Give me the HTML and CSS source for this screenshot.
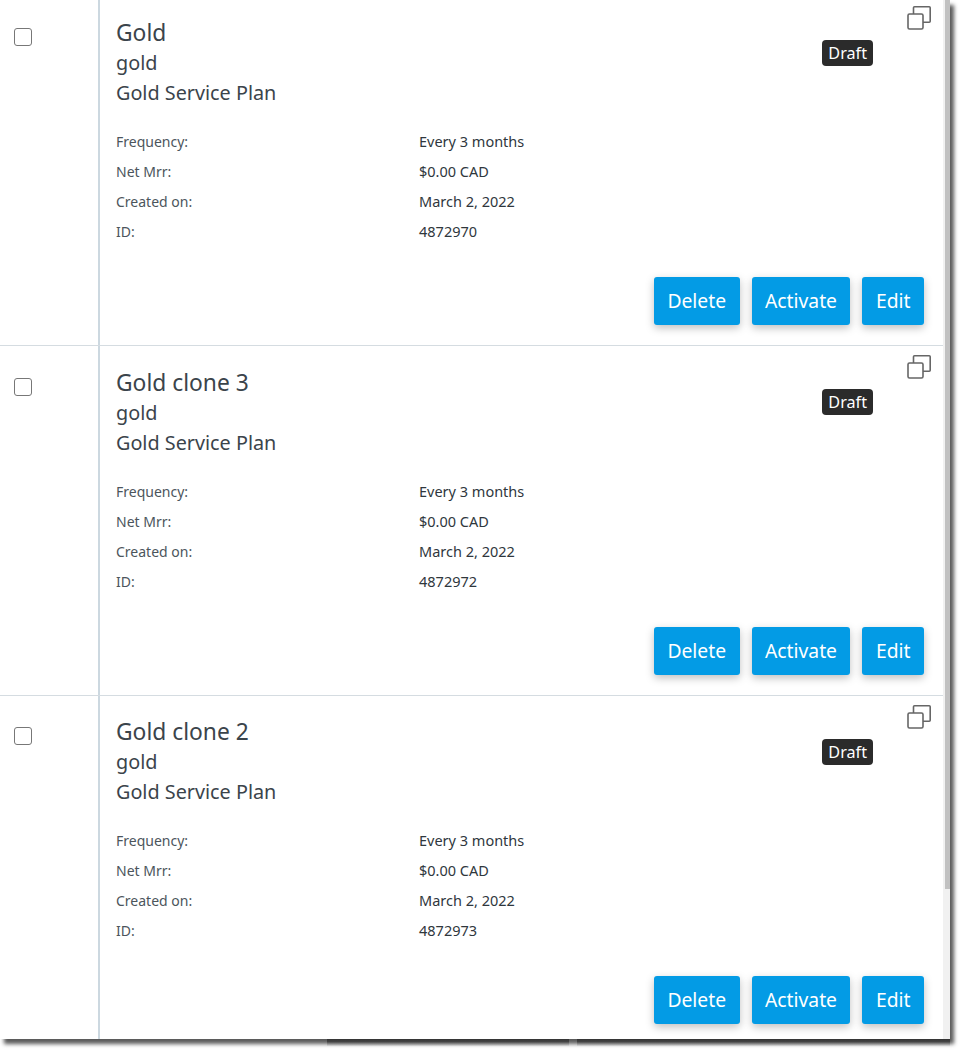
FILE: index.html
```html
<!DOCTYPE html>
<html>
    <head>
        <meta charset="utf-8">
        <title>Plans</title>
        <link rel="stylesheet" href="styles.css">
    </head>
    <body>
        <div class="window">
            <div class="list">
                <div class="plan">
                    <div class="check"><span class="box"></span></div>
                    <div class="info">
                        <svg class="clone" width="24" height="24" viewBox="0 0 24 24"><path d="M6.500 8V1.800a1 1 0 0 1 1-1h14.700a1 1 0 0 1 1 1v13.400a1 1 0 0 1-1 1H16"/><rect x="1" y="8" width="15" height="15" rx="1.500"/></svg>
                        <div class="head">
                            <div class="titles">
                                <h2>Gold</h2>
                                <p>gold</p>
                                <p>Gold Service Plan</p>
                            </div>
                            <span class="badge">Draft</span>
                        </div>
                        <dl>
                            <dt>Frequency:</dt><dd>Every 3 months</dd>
                            <dt>Net Mrr:</dt><dd>$0.00 CAD</dd>
                            <dt>Created on:</dt><dd>March 2, 2022</dd>
                            <dt>ID:</dt><dd>4872970</dd>
                        </dl>
                        <div class="actions">
                            <a class="btn">Delete</a>
                            <a class="btn">Activate</a>
                            <a class="btn">Edit</a>
                        </div>
                    </div>
                </div>
                <div class="plan">
                    <div class="check"><span class="box"></span></div>
                    <div class="info">
                        <svg class="clone" width="24" height="24" viewBox="0 0 24 24"><path d="M6.500 8V1.800a1 1 0 0 1 1-1h14.700a1 1 0 0 1 1 1v13.400a1 1 0 0 1-1 1H16"/><rect x="1" y="8" width="15" height="15" rx="1.500"/></svg>
                        <div class="head">
                            <div class="titles">
                                <h2>Gold clone 3</h2>
                                <p>gold</p>
                                <p>Gold Service Plan</p>
                            </div>
                            <span class="badge">Draft</span>
                        </div>
                        <dl>
                            <dt>Frequency:</dt><dd>Every 3 months</dd>
                            <dt>Net Mrr:</dt><dd>$0.00 CAD</dd>
                            <dt>Created on:</dt><dd>March 2, 2022</dd>
                            <dt>ID:</dt><dd>4872972</dd>
                        </dl>
                        <div class="actions">
                            <a class="btn">Delete</a>
                            <a class="btn">Activate</a>
                            <a class="btn">Edit</a>
                        </div>
                    </div>
                </div>
                <div class="plan">
                    <div class="check"><span class="box"></span></div>
                    <div class="info">
                        <svg class="clone" width="24" height="24" viewBox="0 0 24 24"><path d="M6.500 8V1.800a1 1 0 0 1 1-1h14.700a1 1 0 0 1 1 1v13.400a1 1 0 0 1-1 1H16"/><rect x="1" y="8" width="15" height="15" rx="1.500"/></svg>
                        <div class="head">
                            <div class="titles">
                                <h2>Gold clone 2</h2>
                                <p>gold</p>
                                <p>Gold Service Plan</p>
                            </div>
                            <span class="badge">Draft</span>
                        </div>
                        <dl>
                            <dt>Frequency:</dt><dd>Every 3 months</dd>
                            <dt>Net Mrr:</dt><dd>$0.00 CAD</dd>
                            <dt>Created on:</dt><dd>March 2, 2022</dd>
                            <dt>ID:</dt><dd>4872973</dd>
                        </dl>
                        <div class="actions">
                            <a class="btn">Delete</a>
                            <a class="btn">Activate</a>
                            <a class="btn">Edit</a>
                        </div>
                    </div>
                </div>
            </div>
            <div class="scrollbar"><div class="thumb"></div></div>
        </div>
        <div class="edge edge-a"></div>
        <div class="edge edge-b"></div>
    </body>
</html>
```

FILE: styles.css
```css
html{background-color:#fff}
body{margin:0; min-height:1054px; position:relative; font-family:"Noto Sans",sans-serif; color:#3b444b}
.window{display:flex; width:950px; height:1039px; overflow:hidden; background-color:#fff; box-shadow:4px 5px 4px #5a5a5a}
.list{width:943px; flex:none; margin-top:-3.5px}
.scrollbar{width:7px; background-color:#f1f1f1; padding-left:2px; box-sizing:border-box}
.thumb{height:889px; background-color:#c1c1c1}
.plan{display:flex; height:349.5px; box-sizing:border-box; border-bottom:1px solid #d5dce1}
.plan:last-child{border-bottom:0}
.check{width:100px; flex:none; border-right:2px solid #ccd8e0; padding:31.5px 0 0 14px; box-sizing:border-box}
.box{display:block; width:18px; height:18px; box-sizing:border-box; border:1.5px solid #777; border-radius:3px; background-color:#fff}
.info{flex:1; position:relative; padding:19.5px 19px 0 16px}
.clone{position:absolute; right:12px; top:9.2px; fill:none; stroke:#666; stroke-width:1.6}
.head{display:flex; justify-content:space-between; align-items:flex-start; height:111px; padding-right:51px}
h2{margin:0 0 -2px; font-size:22.8px; font-weight:400; line-height:34px}
.titles p{margin:0; font-size:19.8px; line-height:30px}
.badge{margin-top:23.5px; background-color:#2b2b2b; color:#fff; font-size:16.2px; line-height:26px; padding:0 6px; border-radius:4px}
dl{display:grid; grid-template-columns:303px 1fr; grid-auto-rows:30px; margin:0; font-size:14px; line-height:30px}
dt{color:#4c555c}
dd{margin:0; font-size:14.5px; line-height:29px; color:#2f373d}
.actions{display:flex; justify-content:flex-end; gap:12px; margin-top:30px}
.btn{background-color:#039be5; color:#fff; font-size:19.3px; line-height:48px; padding:0 13.5px; border-radius:3px; box-shadow:0 3px 8px rgba(0,0,0,.25)}
/* darker shadow left by the windows behind */
.edge{position:absolute; top:1039px; height:7px; background:linear-gradient(#333,#444 40%,#999 75%,#ddd)}
.edge-a{left:327px; width:242px}
.edge-b{left:577px; width:373px}
```
